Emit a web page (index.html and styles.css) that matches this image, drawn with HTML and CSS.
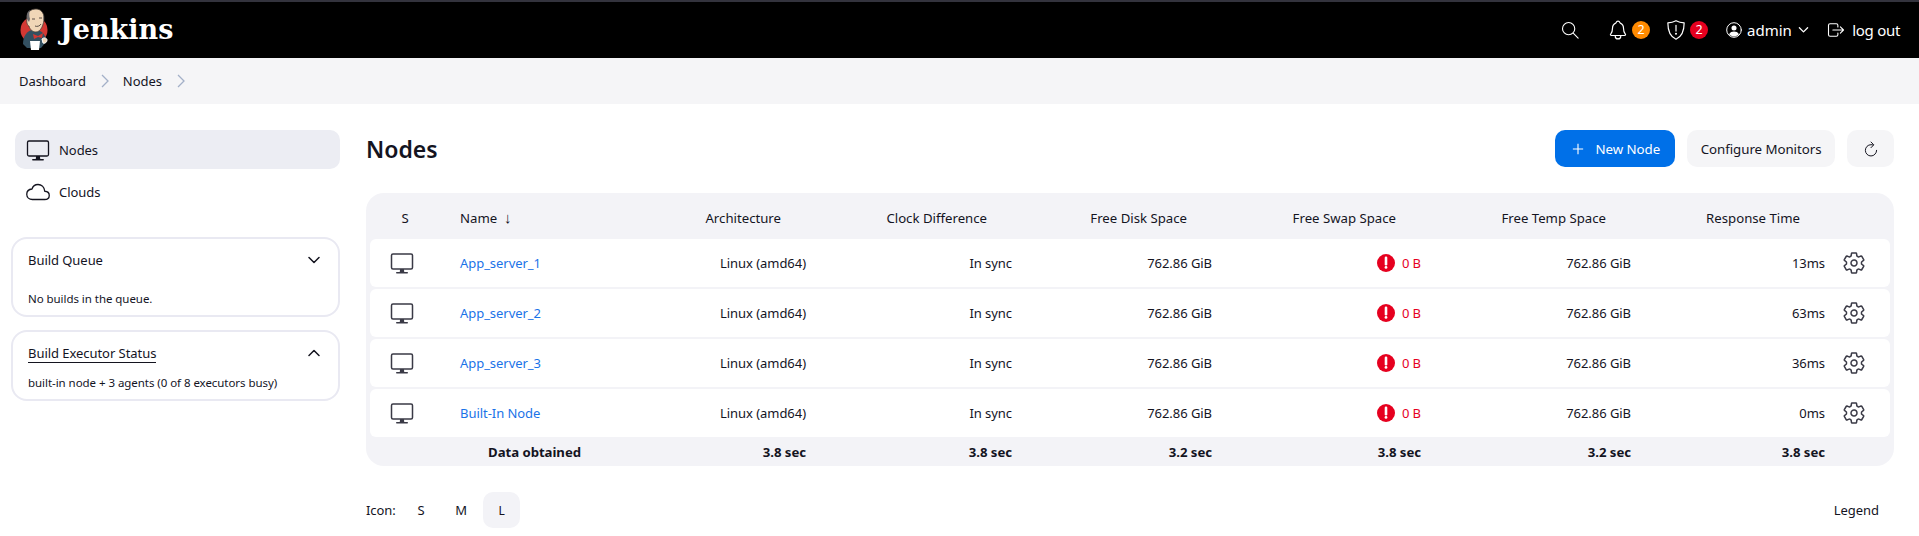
FILE: index.html
```html
<!DOCTYPE html>
<html lang="en">
<head>
<meta charset="utf-8">
<title>Nodes - Jenkins</title>
<link rel="stylesheet" href="styles.css">
</head>
<body>
<header class="topbar">
  <a class="brand">
    <svg class="logo" viewBox="0 0 30 44">
      <circle cx="15" cy="24" r="13.5" fill="#d33833"/>
      <path d="M4 38c0-8 4-13 9-14l8 1c4 2 6 6 6 11l-5 6H8z" fill="#335061"/>
      <path d="M8 12c0-6 4-9 9-9s8 4 8 9c0 6-3 14-8 14-3 0-6-2-7-6-1 0-3-3-2-8z" fill="#f0d6b7" stroke="#49403a" stroke-width=".8"/>
      <path d="M8 13c-1-5 1-8 3-9-1 3-1 6 0 9l-1 3zM24 9c1 2 1 4 0 6z" fill="#6d6b6d"/>
      <path d="M13 13h3M20 12h3M16 20c2 1 5 0 6-2" stroke="#49403a" stroke-width=".9" fill="none"/>
      <path d="M14 28l5 2 5-3-1 5-4-1-4 2z" fill="#d33833"/>
      <path d="M11 35h10l-1 9h-8z" fill="#fff"/>
      <path d="M23 33c2-2 5-1 5 1s-2 4-4 3z" fill="#f0d6b7" stroke="#fff"/>
    </svg>
    <span class="wordmark">Jenkins</span>
  </a>
  <nav class="top-actions">
    <svg class="ticon search-icon" viewBox="0 0 512 512"><path d="M221 64a157 157 0 10157 157A157 157 0 00221 64z M338 338l126 126" class="st st-w"/></svg>
    <span class="tgroup bell-group">
      <svg class="ticon" viewBox="0 0 512 512"><path d="M427.68 351.43C402 320 383.87 304 383.87 217.35 383.87 138 343.35 109.73 310 96c-4.43-1.82-8.6-6-9.95-10.55C294.2 65.54 277.8 48 256 48s-38.19 17.55-44 37.47c-1.35 4.6-5.52 8.71-9.95 10.53-33.39 13.75-73.87 41.92-73.87 121.35C128.13 304 110 320 84.32 351.43 73.68 364.45 83 384 101.61 384h308.88c18.51 0 27.77-19.61 17.19-32.57zM320 384v16a64 64 0 01-128 0v-16" class="st st-w"/></svg>
      <span class="badge badge-orange">2</span>
    </span>
    <span class="tgroup shield-group">
      <svg class="ticon" viewBox="0 0 512 512"><path d="M256 40c-60 30-120 45-190 50 0 170 40 320 190 382 150-62 190-212 190-382-70-5-130-20-190-50z" class="st st-w"/><path d="M256 150v130" class="st st-w"/><circle cx="256" cy="345" r="24" fill="#fff"/></svg>
      <span class="badge badge-red">2</span>
    </span>
    <span class="tgroup user-group">
      <svg class="ticon user-icon" viewBox="0 0 512 512"><circle cx="256" cy="256" r="208" class="st st-w"/><circle cx="256" cy="200" r="72" fill="#fff"/><path d="M116 380c30-60 80-80 140-80s110 20 140 80c-35 40-85 62-140 62s-105-22-140-62z" fill="#fff"/></svg>
      <span class="top-text">admin</span>
      <svg class="caret" viewBox="0 0 12 8"><path d="M1.5 1.5L6 6l4.5-4.5" class="caret-line"/></svg>
    </span>
    <span class="tgroup logout-group">
      <svg class="ticon logout-icon" viewBox="0 0 512 512"><path d="M304 336v40a40 40 0 01-40 40H104a40 40 0 01-40-40V136a40 40 0 0140-40h160c22.09 0 40 17.91 40 40v40M368 336l80-80-80-80M176 256h272" class="st st-w"/></svg>
      <span class="top-text logout-text">log out</span>
    </span>
  </nav>
</header>

<div class="crumbs">
  <span>Dashboard</span>
  <svg class="crumb-sep" viewBox="0 0 8 14"><path d="M1 1l6 6-6 6"/></svg>
  <span>Nodes</span>
  <svg class="crumb-sep" viewBox="0 0 8 14"><path d="M1 1l6 6-6 6"/></svg>
</div>

<div class="page">
  <aside class="side">
    <a class="side-item active">
      <svg class="side-icon" viewBox="0 0 512 512"><rect x="32" y="64" width="448" height="320" rx="32" class="st st-d"/><path d="M304 448l-8-64h-80l-8 64h96z" fill="#14141f"/><path d="M368 464H144" class="st st-d"/></svg>
      <span>Nodes</span>
    </a>
    <a class="side-item">
      <svg class="side-icon" viewBox="0 0 512 512"><path d="M400 240c-8.89-89.54-71-144-144-144-69 0-113.44 48.2-128 96-60 6-112 43.59-112 112 0 66 54 112 120 112h260c55 0 100-27.44 100-88 0-59.82-53-85.76-96-88z" class="st st-d"/></svg>
      <span>Clouds</span>
    </a>
    <section class="panel panel-queue">
      <div class="panel-head">
        <span>Build Queue</span>
        <svg class="panel-caret" viewBox="0 0 12 8"><path d="M1 1.5L6 6.5l5-5"/></svg>
      </div>
      <p class="panel-body">No builds in the queue.</p>
    </section>
    <section class="panel panel-exec">
      <div class="panel-head">
        <span class="underlined">Build Executor Status</span>
        <svg class="panel-caret" viewBox="0 0 12 8"><path d="M1 6.5L6 1.5l5 5"/></svg>
      </div>
      <p class="panel-body">built-in node + 3 agents (0 of 8 executors busy)</p>
    </section>
  </aside>

  <main class="main">
    <div class="title-row">
      <h1>Nodes</h1>
      <div class="buttons">
        <a class="btn btn-primary">
          <svg class="plus" viewBox="0 0 14 14"><path d="M7 1v12M1 7h12"/></svg>
          New Node
        </a>
        <a class="btn">Configure Monitors</a>
        <a class="btn btn-icon">
          <svg class="refresh" viewBox="0 0 512 512"><path d="M320 146s24.36-12-64-12a160 160 0 10160 160" class="st st-d"/><path d="M256 58l80 80-80 80" class="st st-d"/></svg>
        </a>
      </div>
    </div>

    <div class="table">
      <div class="grid thead">
        <span class="c-s">S</span>
        <span class="c-name">Name&nbsp; <span class="sort-arrow">↓</span></span>
        <span class="c-r">Architecture</span>
        <span class="c-r">Clock Difference</span>
        <span class="c-r">Free Disk Space</span>
        <span class="c-r">Free Swap Space</span>
        <span class="c-r">Free Temp Space</span>
        <span class="c-r">Response Time</span>
        <span></span>
      </div>

      <div class="grid row">
        <span class="c-icon"><svg class="node-icon" viewBox="0 0 512 512"><rect x="32" y="64" width="448" height="320" rx="32" class="st st-n"/><path d="M304 448l-8-64h-80l-8 64h96z" fill="#3a3a46"/><path d="M368 464H144" class="st st-n"/></svg></span>
        <a class="c-name link">App_server_1</a>
        <span class="c-v">Linux (amd64)</span>
        <span class="c-v">In sync</span>
        <span class="c-v">762.86 GiB</span>
        <span class="c-v warn"><svg class="alert" viewBox="0 0 18 18"><circle cx="9" cy="9" r="9"/><path d="M9 3.8v6.4"/><circle class="dot" cx="9" cy="13.4" r="1.4"/></svg>0 B</span>
        <span class="c-v">762.86 GiB</span>
        <span class="c-v">13ms</span>
        <span class="c-gear"><svg class="gear" viewBox="0 0 512 512"><use href="#gear-shape"/></svg></span>
      </div>

      <div class="grid row">
        <span class="c-icon"><svg class="node-icon" viewBox="0 0 512 512"><rect x="32" y="64" width="448" height="320" rx="32" class="st st-n"/><path d="M304 448l-8-64h-80l-8 64h96z" fill="#3a3a46"/><path d="M368 464H144" class="st st-n"/></svg></span>
        <a class="c-name link">App_server_2</a>
        <span class="c-v">Linux (amd64)</span>
        <span class="c-v">In sync</span>
        <span class="c-v">762.86 GiB</span>
        <span class="c-v warn"><svg class="alert" viewBox="0 0 18 18"><circle cx="9" cy="9" r="9"/><path d="M9 3.8v6.4"/><circle class="dot" cx="9" cy="13.4" r="1.4"/></svg>0 B</span>
        <span class="c-v">762.86 GiB</span>
        <span class="c-v">63ms</span>
        <span class="c-gear"><svg class="gear" viewBox="0 0 512 512"><use href="#gear-shape"/></svg></span>
      </div>

      <div class="grid row">
        <span class="c-icon"><svg class="node-icon" viewBox="0 0 512 512"><rect x="32" y="64" width="448" height="320" rx="32" class="st st-n"/><path d="M304 448l-8-64h-80l-8 64h96z" fill="#3a3a46"/><path d="M368 464H144" class="st st-n"/></svg></span>
        <a class="c-name link">App_server_3</a>
        <span class="c-v">Linux (amd64)</span>
        <span class="c-v">In sync</span>
        <span class="c-v">762.86 GiB</span>
        <span class="c-v warn"><svg class="alert" viewBox="0 0 18 18"><circle cx="9" cy="9" r="9"/><path d="M9 3.8v6.4"/><circle class="dot" cx="9" cy="13.4" r="1.4"/></svg>0 B</span>
        <span class="c-v">762.86 GiB</span>
        <span class="c-v">36ms</span>
        <span class="c-gear"><svg class="gear" viewBox="0 0 512 512"><use href="#gear-shape"/></svg></span>
      </div>

      <div class="grid row">
        <span class="c-icon"><svg class="node-icon" viewBox="0 0 512 512"><rect x="32" y="64" width="448" height="320" rx="32" class="st st-n"/><path d="M304 448l-8-64h-80l-8 64h96z" fill="#3a3a46"/><path d="M368 464H144" class="st st-n"/></svg></span>
        <a class="c-name link">Built-In Node</a>
        <span class="c-v">Linux (amd64)</span>
        <span class="c-v">In sync</span>
        <span class="c-v">762.86 GiB</span>
        <span class="c-v warn"><svg class="alert" viewBox="0 0 18 18"><circle cx="9" cy="9" r="9"/><path d="M9 3.8v6.4"/><circle class="dot" cx="9" cy="13.4" r="1.4"/></svg>0 B</span>
        <span class="c-v">762.86 GiB</span>
        <span class="c-v">0ms</span>
        <span class="c-gear"><svg class="gear" viewBox="0 0 512 512"><use href="#gear-shape"/></svg></span>
      </div>

      <div class="grid tfoot">
        <span></span>
        <span class="c-v">Data obtained</span>
        <span class="c-v">3.8 sec</span>
        <span class="c-v">3.8 sec</span>
        <span class="c-v">3.2 sec</span>
        <span class="c-v">3.8 sec</span>
        <span class="c-v">3.2 sec</span>
        <span class="c-v">3.8 sec</span>
        <span></span>
      </div>
    </div>

    <div class="bottom-row">
      <div class="sizes">
        <span class="size-label">Icon:</span>
        <a class="size">S</a>
        <a class="size">M</a>
        <a class="size current">L</a>
      </div>
      <a class="legend">Legend</a>
    </div>
  </main>
</div>

<svg class="defs" aria-hidden="true">
  <defs>
    <path id="gear-shape" class="st st-n gear-line" d="M262.29 192.31a64 64 0 1057.4 57.4 64.13 64.13 0 00-57.4-57.4zM416.39 256a154.34 154.34 0 01-1.53 20.79l45.21 35.46a10.81 10.81 0 012.45 13.75l-42.77 74a10.81 10.81 0 01-13.14 4.59l-44.9-18.08a16.11 16.11 0 00-15.17 1.75A164.48 164.48 0 01325 400.8a15.94 15.94 0 00-8.82 12.14l-6.73 47.89a11.08 11.08 0 01-10.68 9.17h-85.54a11.11 11.11 0 01-10.69-8.87l-6.72-47.82a16.07 16.07 0 00-9-12.22 155.3 155.3 0 01-21.46-12.57 16 16 0 00-15.11-1.71l-44.89 18.07a10.81 10.81 0 01-13.14-4.58l-42.77-74a10.8 10.8 0 012.45-13.75l38.21-30a16.05 16.05 0 006-14.08c-.36-4.17-.58-8.33-.58-12.5s.21-8.27.58-12.35a16 16 0 00-6.07-13.94l-38.19-30A10.81 10.81 0 0149.48 186l42.77-74a10.81 10.81 0 0113.14-4.59l44.9 18.08a16.11 16.11 0 0015.17-1.75A164.48 164.48 0 01187 111.2a15.94 15.94 0 008.82-12.14l6.73-47.89A11.08 11.08 0 01213.23 42h85.54a11.11 11.11 0 0110.69 8.87l6.72 47.82a16.07 16.07 0 009 12.22 155.3 155.3 0 0121.46 12.57 16 16 0 0015.11 1.71l44.89-18.07a10.81 10.81 0 0113.14 4.58l42.77 74a10.8 10.8 0 01-2.45 13.75l-38.21 30a16.05 16.05 0 00-6.05 14.08c.33 4.14.55 8.3.55 12.47z"/>
  </defs>
</svg>
</body>
</html>
```
FILE: styles.css
```css
* { box-sizing: border-box; }
html, body { margin: 0; padding: 0; height: 536px; overflow: hidden; background: #fff; }
body { font-family: "Noto Sans", "Open Sans", sans-serif; font-size: 13px; letter-spacing: -0.05px; color: #14141f; }
p, h1 { margin: 0; }
.defs { width: 0; height: 0; display: block; }

.st { fill: none; stroke-linecap: round; stroke-linejoin: round; }
.st-w { stroke: #fff; stroke-width: 28; }
.st-d { stroke: #14141f; stroke-width: 28; }
.st-n { stroke: #3a3a46; stroke-width: 32; }

/* top bar */
.topbar { height: 58px; background: #000; border-top: 2px solid #33333d; display: flex; align-items: center; justify-content: space-between; padding: 0 19px; }
.brand { display: flex; align-items: center; gap: 11px; }
.logo { width: 30px; height: 44px; display: block; margin-top: -4px; }
.wordmark { font-family: "DejaVu Serif", "Liberation Serif", serif; font-weight: 700; font-size: 27px; letter-spacing: 0; color: #fff; margin-top: -2px; }
.top-actions { display: flex; align-items: center; color: #fff; }
.ticon { width: 22px; height: 22px; display: block; }
.tgroup { display: flex; align-items: center; }
.search-icon { width: 20px; height: 20px; margin-right: 27.5px; }
.bell-group { gap: 3px; margin-right: 15px; }
.shield-group { gap: 3px; margin-right: 17px; }
.user-group { gap: 4px; margin-right: 17.4px; }
.user-icon { width: 18px; height: 18px; }
.logout-group { gap: 6px; }
.logout-icon { width: 20px; height: 20px; }
.badge { width: 18px; height: 18px; border-radius: 50%; font-size: 12.5px; line-height: 18px; text-align: center; color: #fff; }
.badge-orange { background: #ff8a00; }
.badge-red { background: #e6001f; }
.top-text { font-size: 15px; color: #fff; line-height: 20px; letter-spacing: 0; }
.logout-text { letter-spacing: -0.3px; }
.caret { width: 11px; height: 8px; margin-left: 2px; }
.caret-line { fill: none; stroke: #fff; stroke-width: 1.4; stroke-linecap: round; stroke-linejoin: round; }

/* breadcrumbs */
.crumbs { height: 46px; background: #f5f5f7; display: flex; align-items: center; padding-left: 19px; color: #14141f; }
.crumb-sep { width: 8px; height: 14px; margin: 0 14px 0 15px; }
.crumb-sep path { fill: none; stroke: #a3b0c8; stroke-width: 1.3; }

/* page layout */
.page { display: flex; align-items: flex-start; }
.side { width: 329px; margin-left: 11px; flex: none; padding-top: 26px; }
.side-item { display: flex; align-items: center; height: 39px; margin-left: 4px; padding-left: 11px; gap: 9px; border-radius: 10px; }
.side-item.active { background: #ecedf3; margin-bottom: 3px; }
.side-icon { width: 24px; height: 24px; display: block; flex: none; }

.panel { border: 2px solid #e9e9f2; border-radius: 16px; padding: 0 18px 0 15px; width: 329px; }
.panel-queue { height: 80px; margin-top: 26px; }
.panel-exec { height: 71px; margin-top: 13px; }
.panel-head { display: flex; justify-content: space-between; align-items: center; height: 20px; margin-top: 11px; }
.panel-queue .panel-head { margin-bottom: 20px; }
.panel-exec .panel-head { margin-bottom: 11px; }
.underlined { border-bottom: 1px solid #14141f; line-height: 18px; }
.panel-caret { width: 12px; height: 8px; }
.panel-caret path { fill: none; stroke: #14141f; stroke-width: 1.5; stroke-linecap: round; stroke-linejoin: round; }
.panel-body { font-size: 11.5px; line-height: 18px; }

.main { width: 1528px; margin-left: 26px; flex: none; padding-top: 26px; }
.title-row { display: flex; justify-content: space-between; align-items: center; height: 37px; }
h1 { font-size: 23px; font-weight: 600; line-height: 40px; letter-spacing: 0; }
.buttons { display: flex; gap: 12px; }
.btn { height: 37px; display: flex; align-items: center; padding: 0 13.5px; border-radius: 10px; background: #f5f5f7; font-size: 13.3px; }
.btn-primary { background: #0070e8; color: #fff; padding: 0 15px 0 17px; gap: 12px; }
.btn-icon { width: 47px; justify-content: center; padding: 0; }
.plus { width: 12px; height: 12px; }
.plus path { stroke: #fff; stroke-width: 1.3; fill: none; }
.refresh { width: 18px; height: 18px; }

/* table */
.table { margin-top: 26px; height: 273px; background: #f3f3f7; border-radius: 18px; padding: 0 4px; }
.grid { display: grid; grid-template-columns: 90px 121px 225px 206px 200px 209px 210px 194px 65px; align-items: center; }
.thead { height: 46px; padding-top: 4px; font-size: 13.2px; letter-spacing: 0; }
.sort-arrow { font-size: 15px; line-height: 1; }
.row { height: 48px; background: #fff; border-radius: 6px; margin-bottom: 2px; }
.row:nth-of-type(5) { margin-bottom: 0; }
.tfoot { height: 29px; font-weight: 700; font-size: 13.2px; }
.c-s { text-align: center; padding-right: 20px; }
.c-name { white-space: nowrap; }
.c-r { text-align: right; padding-right: 25px; white-space: nowrap; }
.c-v { text-align: right; white-space: nowrap; }
.c-icon { display: block; padding-left: 20px; }
.node-icon { width: 24px; height: 24px; display: block; }
.link { color: #1a73e8; }
.warn { color: #e6001f; display: flex; justify-content: flex-end; align-items: center; gap: 7px; }
.alert { width: 18px; height: 18px; }
.alert circle { fill: #e6001f; }
.alert path { stroke: #fff; stroke-width: 2.6; stroke-linecap: round; fill: none; }
.alert .dot { fill: #fff; }
.c-gear { padding-left: 17px; display: block; }
.gear { width: 24px; height: 24px; display: block; }

/* bottom row */
.bottom-row { display: flex; justify-content: space-between; align-items: center; margin-top: 26px; height: 36px; }
.sizes { display: flex; align-items: center; gap: 4px; }
.size-label { width: 33px; }
.size { width: 36px; height: 36px; border-radius: 10px; display: flex; align-items: center; justify-content: center; }
.size.current { background: #f3f3f7; font-size: 12px; width: 37px; }
.legend { margin-right: 15px; }
```
